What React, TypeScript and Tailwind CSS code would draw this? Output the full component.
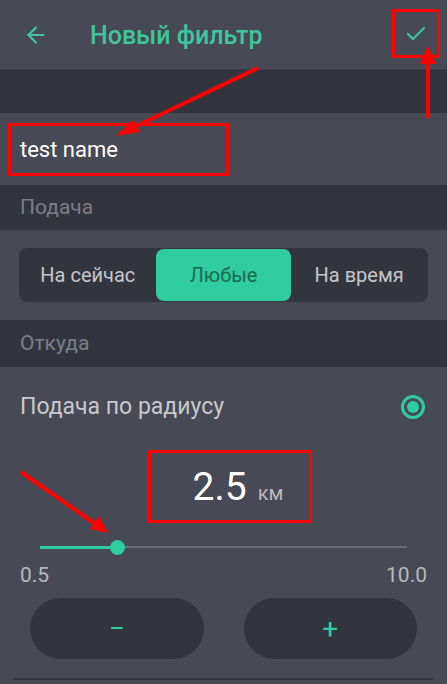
import { ArrowLeft, Check } from "lucide-react";

export default function App() {
    return (
        <div className="relative w-[447px] h-[684px] overflow-hidden bg-[#474954] font-['Roboto',sans-serif]">
            {/* HEADER */}
            <div className="h-[69px] flex items-center">
                <ArrowLeft className="ml-[23px] text-[#3fc59b]" size={26} strokeWidth={2} />
                <h1 className="ml-[41px] mt-[2px] text-[25px] font-medium text-[#3fc59b]">Новый фильтр</h1>
                <div className="ml-auto mr-[7px] w-[48px] h-[49px] border-[3px] border-[#ff0000] flex items-center justify-center -mt-[2px]">
                    <Check className="text-[#3fc59b]" size={24} strokeWidth={2.2} />
                </div>
            </div>

            <div className="h-[44px] bg-[#33353e] border-t border-[#3b3d46]" />

            {/* NAME */}
            <div className="h-[72px] flex items-center pl-[8px]">
                <div className="w-[221px] h-[53px] border-[3px] border-[#ff0000] flex items-center pl-[9px]">
                    <span className="text-[22px] text-white">test name</span>
                </div>
            </div>

            {/* ПОДАЧА */}
            <div className="h-[45px] bg-[#33353e] flex items-center px-5">
                <span className="text-[21px] text-[#7b7e88]">Подача</span>
            </div>

            <div className="h-[90px] flex items-center px-[19px]">
                <div className="w-full h-[54px] rounded-lg bg-[#33353e] grid grid-cols-3 p-[1px] text-[20px]">
                    <div className="flex items-center justify-center text-[#c5c6ca]">На сейчас</div>
                    <div className="flex items-center justify-center rounded-lg bg-[#2ecc9f] text-[#1d6a52]">Любые</div>
                    <div className="flex items-center justify-center text-[#c5c6ca]">На время</div>
                </div>
            </div>

            {/* ОТКУДА */}
            <div className="h-[47px] bg-[#33353e] flex items-center px-5">
                <span className="text-[21px] text-[#7b7e88]">Откуда</span>
            </div>

            <div className="h-[80px] flex items-center justify-between pl-5 pr-[22px]">
                <span className="text-[23px] text-[#c8c9cc]">Подача по радиусу</span>
                <div className="w-[24px] h-[24px] rounded-full border-[3px] border-[#2ecc9f] flex items-center justify-center">
                    <div className="w-[12px] h-[12px] rounded-full bg-[#2ecc9f]" />
                </div>
            </div>

            {/* VALUE */}
            <div className="flex justify-center pl-[13px] mt-[3px]">
                <div className="w-[164px] h-[73px] border-[3px] border-[#ff0000] flex items-center justify-center gap-[11px] pt-[2px] pl-[16px]">
                    <span className="text-[39px] text-white">2.5</span>
                    <span className="text-[20px] text-[#b9bbc0] mt-[10px]">км</span>
                </div>
            </div>

            {/* SLIDER */}
            <div className="relative mx-[40px] mt-[22px] h-[4px] flex items-center">
                <div className="h-[3px] w-[77px] bg-[#2ecc9f]" />
                <div className="h-[2px] flex-1 bg-[#6b6d77]" />
                <div className="absolute left-[70px] w-[15px] h-[15px] rounded-full bg-[#2ecc9f]" />
            </div>

            <div className="flex justify-between px-5 mt-[12px] text-[21px] leading-[28px] text-[#b8b9bd]">
                <span>0.5</span>
                <span>10.0</span>
            </div>

            <div className="grid grid-cols-2 gap-[40px] px-[30px] mt-[9px]">
                <button className="h-[61px] rounded-full bg-[#33353e] flex items-center justify-center text-[28px] text-[#2ecc9f] leading-none">−</button>
                <button className="h-[61px] rounded-full bg-[#33353e] flex items-center justify-center text-[28px] text-[#2ecc9f] leading-none">+</button>
            </div>

            <div className="mx-[14px] mt-[19px] h-[2px] bg-[#34363f]" />

            {/* annotation arrows */}
            <svg className="absolute inset-0 pointer-events-none" width="447" height="684">
                <line x1="258" y1="68" x2="128" y2="130" stroke="#ff0000" strokeWidth="4" />
                <polygon points="116,136 133,120 140,132" fill="#ff0000" />
                <line x1="428" y1="118" x2="428" y2="60" stroke="#ff0000" strokeWidth="4" />
                <polygon points="428,46 420,64 436,64" fill="#ff0000" />
                <line x1="21" y1="472" x2="97" y2="525" stroke="#ff0000" strokeWidth="4" />
                <polygon points="108,533 90,529 99,516" fill="#ff0000" />
            </svg>
        </div>
    );
}
